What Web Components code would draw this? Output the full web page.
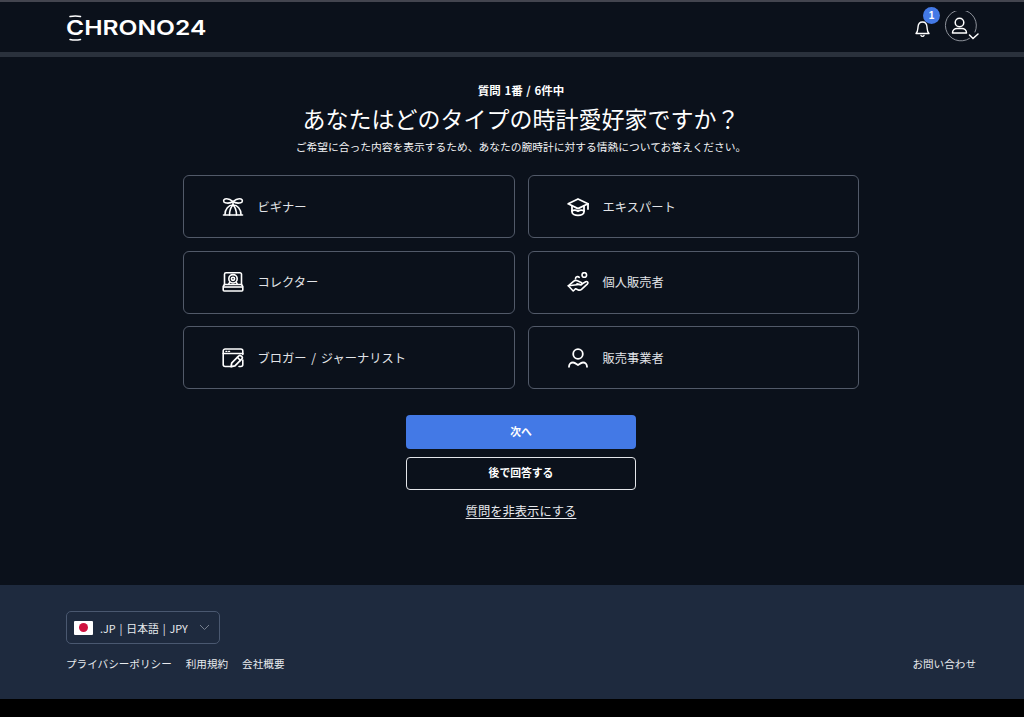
<!DOCTYPE html>
<html lang="ja">
<head>
<meta charset="utf-8">
<title>Chrono24</title>
<style>
  html, body { margin: 0; background: #000; }
  body { font-family: "Noto Sans CJK JP", "Noto Sans", sans-serif; color: #fff; }
  #page { display: flex; flex-direction: column; height: 699px; overflow: hidden; }
</style>
</head>
<body>
<template id="option-icons">
  <svg data-icon="beginner" viewBox="0 0 22 20"><g fill="none" stroke="#fff" stroke-width="1.600" stroke-linejoin="round" stroke-linecap="round"><path d="M11 4.500 C8 2 4.500 1.500 3 2 C1 2.700 1.300 5.300 3.300 5.800 C5.500 6.300 9 6 11 4.500 Z"/><path d="M11 4.500 C14 2 17.500 1.500 19 2 C21 2.700 20.700 5.300 18.700 5.800 C16.500 6.300 13 6 11 4.500 Z"/><path d="M11 4.500 V8"/><path d="M3 17.500 C3 12 6.500 8 11 8 C15.500 8 19 12 19 17.500"/><path d="M1.500 18 H20.500"/><path d="M7.500 18 C7.500 13.500 9 10 11 8 C13 10 14.500 13.500 14.500 18"/></g></svg>
  <svg data-icon="collector" viewBox="0 0 22 20"><g fill="none" stroke="#fff" stroke-width="1.600" stroke-linejoin="round"><path d="M4 .8 H18 A1.500 1.500 0 0 1 19.500 2.300 V12.500 H2.500 V2.300 A1.500 1.500 0 0 1 4 .8 Z"/><path d="M2.500 12.500 L1.200 14.500 V18 A1 1 0 0 0 2.200 19 H19.800 A1 1 0 0 0 20.800 18 V14.500 L19.500 12.500"/><path d="M1.200 15 H20.800"/><circle cx="11" cy="6.800" r="4.200"/><circle cx="11" cy="6.800" r="1.600"/><path d="M6.500 12.500 L7.800 10 M15.500 12.500 L14.200 10"/></g></svg>
  <svg data-icon="blogger" viewBox="0 0 22 20"><g fill="none" stroke="#fff" stroke-linejoin="round" stroke-linecap="round"><path d="M10 18.500 H3.200 A2 2 0 0 1 1.200 16.500 V3 A2 2 0 0 1 3.200 1 H18.800 A2 2 0 0 1 20.800 3 V6.500" stroke-width="1.600"/><path d="M20.800 12 V16.500 A2 2 0 0 1 18.800 18.500 H17" stroke-width="1.600"/><path d="M1.200 5.500 H20.800" stroke-width="1.600"/><path d="M3.800 3.300 H5 M6.500 3.300 H7.700" stroke-width="1.200"/><path d="M9 18.600 L9.800 14.800 L16.800 7.800 A1.500 1.500 0 0 1 19 7.800 L19.900 8.700 A1.500 1.500 0 0 1 19.900 10.900 L12.900 17.900 Z" stroke-width="1.700"/><path d="M15.300 9.300 L18.400 12.400" stroke-width="1.500"/></g></svg>
  <svg data-icon="expert" viewBox="0 0 22 20"><g fill="none" stroke="#fff" stroke-width="1.800" stroke-linejoin="round" stroke-linecap="round"><path d="M11 2 L21 6.800 L11 11.600 L1.200 6.800 Z"/><path d="M5 9 V14.800 C5 17 8 18.400 11 18.400 C14 18.400 17 17 17 14.800 V9"/><path d="M5 13.800 C7 12.800 9 13 11 14.200 C13 13 15 12.800 17 13.800"/><path d="M21 6.800 V12"/></g></svg>
  <svg data-icon="seller" viewBox="0 0 22 20"><g fill="none" stroke="#fff" stroke-width="1.600" stroke-linejoin="round" stroke-linecap="round"><circle cx="17.300" cy="2.900" r="2.300"/><path d="M8.500 6.800 C8.300 4.800 10.800 4 12.300 5.300"/><path d="M1.300 13.800 L6.500 9.300 C7.800 8.300 9.300 8.200 10.500 8.800 L14.200 10.500 C15.700 11.300 14.800 13.300 13.200 12.800 L10 11.800"/><path d="M14.400 12.200 L18.700 9.700 C20.300 9 21.600 10.500 20.500 11.800 L14.500 17.300 C13.300 18.300 12 18.300 10.800 17.700 L8.700 16.700 L6.200 19 L1.300 13.800 Z"/></g></svg>
  <svg data-icon="dealer" viewBox="0 0 22 20"><g fill="none" stroke="#fff" stroke-width="1.800" stroke-linecap="round"><circle cx="11" cy="6" r="4.800"/><path d="M2 18.800 C2 16.300 3.800 14.500 6 14.500 C8 14.500 9.200 15.800 11 17 C12.800 15.800 14 14.500 16 14.500 C18.200 14.500 20 16.300 20 18.800"/></g></svg>
</template>

<div id="page">
  <site-header></site-header>
  <quiz-panel>
    <quiz-option icon="beginner">ビギナー</quiz-option>
    <quiz-option icon="expert">エキスパート</quiz-option>
    <quiz-option icon="collector">コレクター</quiz-option>
    <quiz-option icon="seller">個人販売者</quiz-option>
    <quiz-option icon="blogger">ブロガー / ジャーナリスト</quiz-option>
    <quiz-option icon="dealer">販売事業者</quiz-option>
  </quiz-panel>
  <site-footer></site-footer>
</div>

<script>
const CJK = `"Noto Sans CJK JP", "Noto Sans", sans-serif`;

class SiteHeader extends HTMLElement {
  constructor() {
    super();
    const shadowRoot = this.attachShadow({mode: 'open'});
    shadowRoot.innerHTML = `
      <style>
        :host {
          display: flex;
          flex: none;
          height: 50px;
          align-items: center;
          justify-content: space-between;
          padding: 0 47px 0 66px;
          background: #0b111b;
          border-top: 2px solid #43454f;
          border-bottom: 5px solid #2a313c;
        }
        .logo {
          position: relative;
          display: block;
          width: 142px;
          height: 26px;
          margin-top: 1px;
        }
        .logo span {
          display: block;
          font: 600 20.500px/26px Inter, sans-serif;
          letter-spacing: 0;
          transform: scaleX(1.2);
          transform-origin: left center;
          white-space: nowrap;
        }
        .logo svg { position: absolute; left: 0; top: 0; }
        .tools { display: flex; align-items: center; gap: 10px; }
        .bell { position: relative; width: 22px; height: 22px; margin-top: 2px; }
        .badge {
          position: absolute;
          left: 11px;
          top: -10px;
          width: 17px;
          height: 17px;
          border-radius: 50%;
          background: #4379e6;
          font: 700 10px/17px "Liberation Sans", sans-serif;
          text-align: center;
        }
        .user { position: relative; width: 32px; height: 32px; margin-right: 1px; }
      </style>
      <a class="logo">
        <span>CHRONO24</span>
        <svg width="20" height="26" viewBox="0 0 20 26"><path d="M3.500 3.400 Q9.500 1.600 15 3.400 M3.500 22.600 Q9.500 24.400 15 22.600" fill="none" stroke="#0b111b" stroke-width="3"/><path d="M4 1.500 Q9.500 .3 14.500 1.500 M4 24.500 Q9.500 25.700 14.500 24.500" fill="none" stroke="#fff" stroke-width="1.500" stroke-linecap="round"/></svg>
      </a>
      <div class="tools">
        <div class="bell">
          <svg width="22" height="22" viewBox="0 0 22 22"><g fill="none" stroke="#fff" stroke-width="1.400" stroke-linejoin="round" stroke-linecap="round"><path d="M4 16.500 C6 14.500 5.800 12 6 10 C6.200 7 8 5 10.500 5 C13 5 14.800 7 15 10 C15.200 12 15 14.500 17 16.500 Z"/><path d="M9 18.500 C9.500 19.700 11.500 19.700 12 18.500"/></g></svg>
          <div class="badge">1</div>
        </div>
        <div class="user">
          <svg width="36" height="32" viewBox="0 0 36 32"><g fill="none" stroke-linecap="round"><path d="M25.500 27.400 A15.500 15.500 0 1 1 31 21" stroke="#8d919a" stroke-width="1"/><g stroke="#fff" stroke-width="1.500"><circle cx="15.500" cy="11.500" r="4.300"/><path d="M8.500 22 C8.500 19 11 17.500 13 17.500 H18 C20 17.500 22.500 19 22.500 22 Z" stroke-linejoin="round"/><path d="M25.500 24 L29 27.500 L34 23"/></g></g></svg>
        </div>
      </div>
    `;
  }
}

class QuizPanel extends HTMLElement {
  constructor() {
    super();
    const shadowRoot = this.attachShadow({mode: 'open'});
    shadowRoot.innerHTML = `
      <style>
        :host {
          display: flex;
          flex: 1;
          flex-direction: column;
          align-items: center;
          box-sizing: border-box;
          padding: 26px 0 0 18px;
          background: #0b111b;
          font-family: ${CJK};
        }
        .count { font-size: 11.500px; line-height: 14px; font-weight: 700; word-spacing: 1px; }
        h1 { margin: 4px 0 0; font-size: 23px; line-height: 34px; font-weight: 400; }
        .lead { margin: 4px 0 0; font-size: 10.750px; line-height: 16px; color: #f2f3f5; }
        .grid {
          display: grid;
          grid-template-columns: 332px 331px;
          grid-auto-rows: 63px;
          column-gap: 13px;
          row-gap: 12.500px;
          margin-top: 20px;
          margin-left: -1px;
        }
        .actions { display: flex; flex-direction: column; align-items: center; margin-top: 26px; }
        button {
          display: block;
          box-sizing: border-box;
          width: 230px;
          height: 34px;
          padding: 0 0 2px;
          border-radius: 4px;
          color: #fff;
          font: 700 10.800px/1 ${CJK};
        }
        .next { background: #4379e6; border: 0; }
        .later { margin-top: 7.500px; height: 33.500px; background: transparent; border: 1px solid #e4e6ea; }
        .hide {
          margin-top: 12px;
          font-size: 12.300px;
          line-height: 18px;
          color: #e8eaee;
          text-decoration: underline;
          text-underline-offset: 2px;
        }
      </style>
      <div class="count">質問 1番 / 6件中</div>
      <h1>あなたはどのタイプの時計愛好家ですか？</h1>
      <p class="lead">ご希望に合った内容を表示するため、あなたの腕時計に対する情熱についてお答えください。</p>
      <div class="grid"><slot></slot></div>
      <div class="actions">
        <button class="next">次へ</button>
        <button class="later">後で回答する</button>
        <a class="hide">質問を非表示にする</a>
      </div>
    `;
  }
}

class QuizOption extends HTMLElement {
  constructor() {
    super();
    const shadowRoot = this.attachShadow({mode: 'open'});
    shadowRoot.innerHTML = `
      <style>
        :host {
          display: flex;
          align-items: center;
          gap: 14px;
          box-sizing: border-box;
          padding-left: 38px;
          border: 1px solid #525a69;
          border-radius: 6px;
          background: #0b111b;
          color: #e2e4e8;
          font-size: 12.250px;
          word-spacing: 2px;
        }
        .icon { display: block; flex: none; width: 22px; height: 20px; }
        .icon svg { display: block; width: 22px; height: 20px; }
      </style>
      <span class="icon"></span>
      <slot></slot>
    `;
  }

  connectedCallback() {
    const icons = document.getElementById('option-icons').content;
    const icon = icons.querySelector(`[data-icon="${this.getAttribute('icon')}"]`);
    this.shadowRoot.querySelector('.icon').append(icon.cloneNode(true));
  }
}

class SiteFooter extends HTMLElement {
  constructor() {
    super();
    const shadowRoot = this.attachShadow({mode: 'open'});
    shadowRoot.innerHTML = `
      <style>
        :host {
          display: block;
          flex: none;
          box-sizing: border-box;
          height: 114px;
          padding: 26px 48px 0 66px;
          background: #1e2a3e;
          color: #e8eaee;
          font-family: ${CJK};
        }
        .locale {
          display: inline-flex;
          align-items: center;
          box-sizing: border-box;
          width: 154px;
          height: 33px;
          padding-left: 7px;
          border: 1px solid #4a5870;
          border-radius: 5px;
          font-size: 10.800px;
          word-spacing: 1.500px;
        }
        .flag {
          position: relative;
          flex: none;
          width: 19px;
          height: 14px;
          margin-right: 7px;
          background: #fff;
          border-radius: 1px;
        }
        .flag::after {
          content: "";
          position: absolute;
          left: 5px;
          top: 2.500px;
          width: 9px;
          height: 9px;
          border-radius: 50%;
          background: #cf1240;
        }
        .locale svg { margin-left: 11px; }
        .links {
          display: flex;
          align-items: center;
          gap: 14px;
          margin-top: 12px;
          font-size: 10.600px;
          line-height: 16px;
        }
        .links .end { margin-left: auto; }
      </style>
      <div class="locale">
        <span class="flag"></span>
        <span>.JP | 日本語 | JPY</span>
        <svg width="11" height="7" viewBox="0 0 11 7"><path d="M1 1 L5.500 5.500 L10 1" fill="none" stroke="#77808f" stroke-width="1"/></svg>
      </div>
      <div class="links">
        <span>プライバシーポリシー</span>
        <span>利用規約</span>
        <span>会社概要</span>
        <span class="end">お問い合わせ</span>
      </div>
    `;
  }
}

customElements.define('site-header', SiteHeader);
customElements.define('quiz-panel', QuizPanel);
customElements.define('quiz-option', QuizOption);
customElements.define('site-footer', SiteFooter);
</script>
</body>
</html>
